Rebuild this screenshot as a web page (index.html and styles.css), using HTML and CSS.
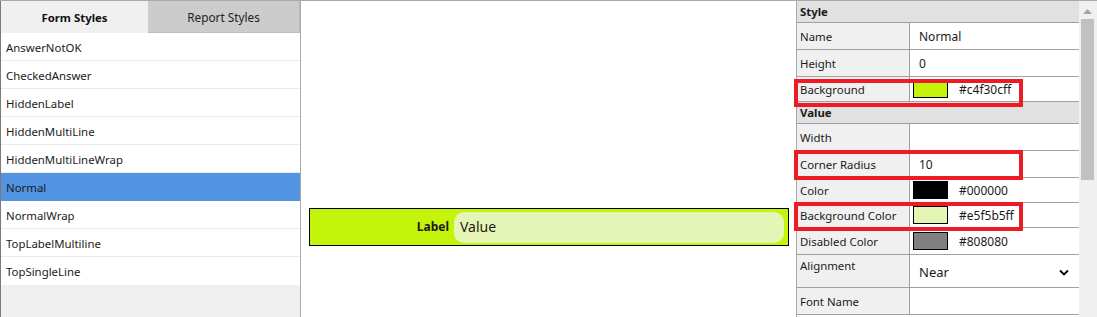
FILE: index.html
```html
<!DOCTYPE html>
<html>
<head>
    <title>Styles</title>
    <meta charset="utf-8">
    <link rel="stylesheet" href="styles.css">
</head>
<body>
    <div class="app">
        <div class="styles">
            <div class="tabs">
                <div class="tab active">Form Styles</div>
                <div class="tab">Report Styles</div>
            </div>
            <div class="list">
                <div class="item">AnswerNotOK</div>
                <div class="item">CheckedAnswer</div>
                <div class="item">HiddenLabel</div>
                <div class="item">HiddenMultiLine</div>
                <div class="item">HiddenMultiLineWrap</div>
                <div class="item selected">Normal</div>
                <div class="item">NormalWrap</div>
                <div class="item">TopLabelMultiline</div>
                <div class="item">TopSingleLine</div>
            </div>
        </div>

        <div class="preview">
            <div class="sample">
                <div class="sample-label">Label</div>
                <div class="sample-value">Value</div>
            </div>
        </div>

        <div class="props">
            <div class="grid">
                <div class="group">Style</div>
                <div class="row h27"><div class="name">Name</div><div class="val">Normal</div></div>
                <div class="row h27"><div class="name">Height</div><div class="val">0</div></div>
                <div class="row h25"><div class="name">Background</div><div class="val"><span class="swatch" style="background:#c4f30c"></span>#c4f30cff</div></div>
                <div class="group">Value</div>
                <div class="row h27"><div class="name">Width</div><div class="val"></div></div>
                <div class="row h27"><div class="name">Corner Radius</div><div class="val">10</div></div>
                <div class="row h25"><div class="name">Color</div><div class="val"><span class="swatch" style="background:#000000"></span>#000000</div></div>
                <div class="row h25"><div class="name">Background Color</div><div class="val"><span class="swatch" style="background:#e5f5b5"></span>#e5f5b5ff</div></div>
                <div class="row h27"><div class="name">Disabled Color</div><div class="val"><span class="swatch" style="background:#808080"></span>#808080</div></div>
                <div class="row h33 top"><div class="name">Alignment</div><div class="val select">Near
                    <svg class="chev" width="10" height="7" viewBox="0 0 10 7"><path d="M1 1.5 L5 5.5 L9 1.5" fill="none" stroke="#000" stroke-width="1.8"/></svg></div></div>
                <div class="row h27"><div class="name">Font Name</div><div class="val"></div></div>
            </div>
            <div class="scrollbar">
                <svg class="arrow" width="9" height="5" viewBox="0 0 9 5"><path d="M0 5 L4.5 0 L9 5 Z" fill="#a3a3a3"/></svg>
                <div class="thumb"></div>
            </div>
        </div>

        <!-- red annotation boxes -->
        <div class="mark m1"></div>
        <div class="mark m2"></div>
        <div class="mark m3"></div>
    </div>
</body>
</html>
```

FILE: styles.css
```css
* {
    box-sizing: border-box;
}
body {
    margin: 0;
    font-family: "Noto Sans", sans-serif;
    font-size: 11.4px;
    color: #1a1a1a;
    background: #fff;
}
.app {
    position: relative;
    display: flex;
    width: 1097px;
    height: 317px;
    border-top: 1px solid #a9a9a9;
    overflow: hidden;
}

/* left: style list */
.styles {
    width: 301px;
    flex: none;
    display: flex;
    flex-direction: column;
    border-left: 1px solid #7a7a7a;
    border-right: 1px solid #a9a9a9;
    background: #f0f0f0;
}
.tabs {
    display: flex;
    height: 32px;
}
.tab {
    flex: 1;
    display: flex;
    align-items: center;
    justify-content: center;
    background: #cccccc;
    color: #222;
    font-size: 11.8px;
    border-bottom: 1px solid #bdbdbd;
    border-right: 1px solid #b8b8b8;
}
.tab.active {
    flex: none;
    width: 147px;
    background: #f0f0f0;
    font-weight: bold;
    font-size: 11.4px;
    color: #111;
    border: none;
}
.list {
    background: #fff;
}
.item {
    height: 28px;
    line-height: 29px;
    padding-left: 5px;
    border-bottom: 1px solid #ebebeb;
}
.item.selected {
    background: #5294e2;
    border-bottom-color: #5294e2;
}
.item:last-child {
    border-bottom: none;
}

/* middle: preview */
.preview {
    flex: 1;
    padding: 207px 7px 0 8px;
    background: #fff;
}
.sample {
    display: flex;
    height: 38px;
    padding: 3px 4px 2px 0;
    border: 1px solid #000;
    background: #c4f30c;
}
.sample-label {
    width: 139px;
    margin-right: 5px;
    text-align: right;
    font-weight: bold;
    font-size: 12px;
    line-height: 30px;
}
.sample-value {
    flex: 1;
    border-radius: 10px;
    background: #e5f5b5;
    padding-left: 6px;
    font-size: 14px;
    line-height: 30px;
}

/* right: property grid */
.props {
    width: 301px;
    flex: none;
    display: flex;
    border-left: 1px solid #a9a9a9;
}
.grid {
    flex: 1;
}
.group {
    height: 22px;
    line-height: 22px;
    padding-left: 3px;
    background: #e1e1e1;
    font-weight: bold;
    border-bottom: 1px solid #a0a0a0;
}
.row {
    display: grid;
    grid-template-columns: 113px 1fr;
    border-bottom: 1px solid #a0a0a0;
}
.h25 { height: 25px; }
.h27 { height: 27px; }
.h33 { height: 33px; }
.name {
    display: flex;
    align-items: center;
    padding-left: 3px;
    background: #f0f0f0;
    border-right: 1px solid #a0a0a0;
}
.val {
    display: flex;
    align-items: center;
    padding-left: 9px;
    background: #fff;
    font-size: 12px;
}
.swatch {
    width: 35px;
    height: 18px;
    margin-left: -6px;
    margin-right: 11px;
    border: 1px solid #000;
}
.row.top .name {
    align-items: flex-start;
    padding-top: 3px;
}
.val.select {
    font-size: 13px;
    justify-content: space-between;
    padding-right: 10px;
    padding-top: 2px;
}
.scrollbar {
    position: relative;
    width: 18px;
    flex: none;
    background: #f0f0f0;
}
.arrow {
    position: absolute;
    left: 4px;
    top: 8px;
}
.thumb {
    position: absolute;
    left: 2px;
    top: 18px;
    width: 13px;
    height: 161px;
    background: #c1c1c1;
}

/* red highlight boxes drawn over the grid */
.mark {
    position: absolute;
    left: 794px;
    width: 229px;
    height: 27px;
    border: 4px solid #ed1c24;
}
.m1 { top: 78px; height: 28px; }
.m2 { top: 149px; height: 30px; }
.m3 { top: 201px; height: 29px; }
```
